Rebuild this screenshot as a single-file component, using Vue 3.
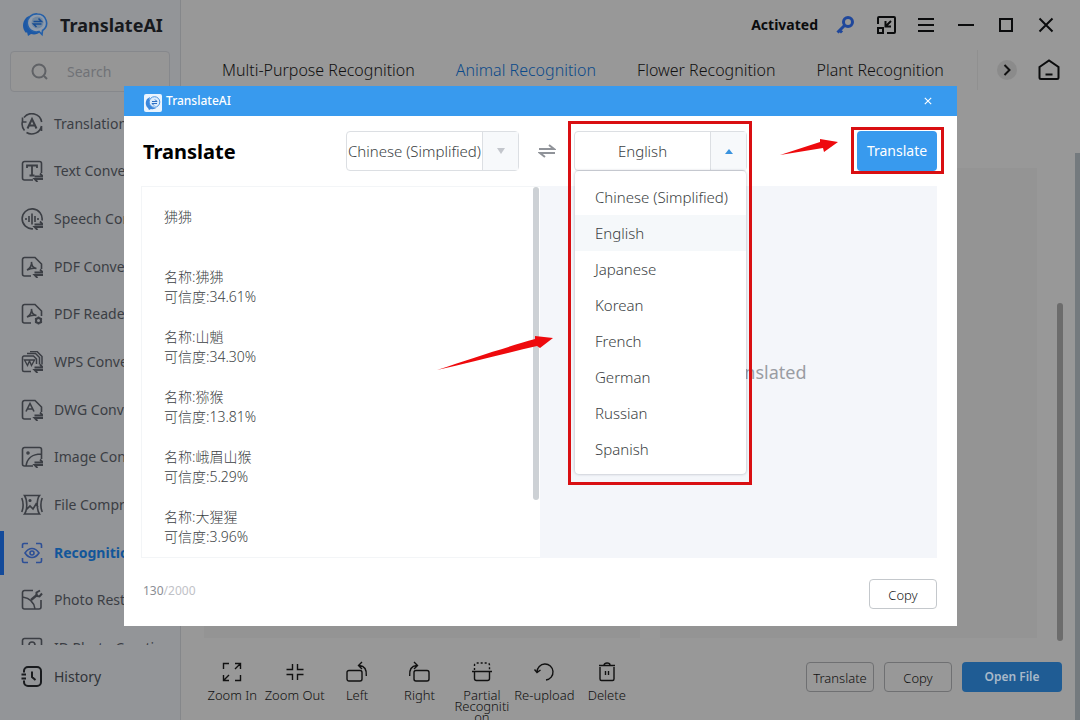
<script setup>
import { ref } from 'vue'

const navItems = [
  { label: 'Translation', icon: 'translation' },
  { label: 'Text Conversion', icon: 'text' },
  { label: 'Speech Conversion', icon: 'speech' },
  { label: 'PDF Conversion', icon: 'pdf' },
  { label: 'PDF Reader', icon: 'reader' },
  { label: 'WPS Conversion', icon: 'wps' },
  { label: 'DWG Conversion', icon: 'dwg' },
  { label: 'Image Conversion', icon: 'image' },
  { label: 'File Compression', icon: 'compress' },
  { label: 'Recognition', icon: 'recognition', active: true },
  { label: 'Photo Restoration', icon: 'restore' },
  { label: 'ID Photo Creation', icon: 'idphoto' },
]
const tabs = ['Multi-Purpose Recognition', 'Animal Recognition', 'Flower Recognition', 'Plant Recognition']
const activeTab = ref('Animal Recognition')
const tools = [
  { label: 'Zoom In', icon: 'in' },
  { label: 'Zoom Out', icon: 'out' },
  { label: 'Left', icon: 'left' },
  { label: 'Right', icon: 'right' },
  { label: 'Partial Recognition', icon: 'partial' },
  { label: 'Re-upload', icon: 'reupload' },
  { label: 'Delete', icon: 'delete' },
]
const languages = ['Chinese (Simplified)', 'English', 'Japanese', 'Korean', 'French', 'German', 'Russian', 'Spanish']
const source = ref('Chinese (Simplified)')
const target = ref('English')
const text = ref(
  '狒狒\n\n\n名称:狒狒\n可信度:34.61%\n\n名称:山魈\n可信度:34.30%\n\n名称:猕猴\n可信度:13.81%\n\n名称:峨眉山猴\n可信度:5.29%\n\n名称:大猩猩\n可信度:3.96%'
)
</script>

<template>
  <div class="app">
    <aside class="sidebar">
      <div class="brand">
        <svg class="logo" viewBox="0 0 26 26" aria-hidden="true">
          <path d="M4 6C0 10 0 17 4 21l1-1 1 4 3-2c4 1 7 0 9-2-8 1-14-6-10-16C6 4 5 5 4 6z" fill="#1c58a6" />
          <path d="M15.500 2a9 9 0 0 1 5 16.500l-.5 4-3-3a9 9 0 1 1-1.500-17.500z" fill="#8f9bab" stroke="#2560a8" stroke-width="1.600" />
          <circle cx="15.500" cy="10.500" r="6" fill="#72889f" />
          <path d="M11.500 9.500h8l-3-3M19.500 12h-8l3 3" fill="none" stroke="#174c94" stroke-width="1.500" />
        </svg>
        <span>TranslateAI</span>
      </div>
      <label class="search">
        <svg viewBox="0 0 18 18" aria-hidden="true"><circle cx="8" cy="8" r="6.500" /><path d="m13 13 3 3" /></svg>
        <input type="search" placeholder="Search" aria-label="Search" />
      </label>
      <nav class="nav">
        <ul>
          <li v-for="item in navItems" :key="item.label">
            <a href="#" :class="{ active: item.active }">
              <svg viewBox="0 0 22 22" aria-hidden="true">
                <template v-if="item.icon === 'translation'">
                  <path d="M3 4.500A10 10 0 0 1 20.700 9M1.300 9A10 10 0 0 0 3.500 17.500M20.500 13A10 10 0 0 1 5.500 19.500M20.500 13v5M1.500 4.500v4.500h4" />
                  <path d="M6.500 15.500 11 6l4.500 9.500M8 12.500h6" stroke-width="2" />
                </template>
                <template v-else-if="item.icon === 'text'">
                  <path d="M12 20H3.500a2 2 0 0 1-2-2V3.500a2 2 0 0 1 2-2h15a2 2 0 0 1 2 2V13" />
                  <path d="M6 8V5.500h10V8M11 5.500V15M8.500 15.500h5" stroke-width="1.800" />
                </template>
                <template v-else-if="item.icon === 'speech'">
                  <path d="M12 20.800A10 10 0 1 1 21 12.500" />
                  <path d="M5 10v2M8 8v6M11 5.500v11M14 8v6M17 10v2" />
                </template>
                <template v-else-if="item.icon === 'pdf' || item.icon === 'reader'">
                  <path d="M10 20H3.500a2 2 0 0 1-2-2V3.500a2 2 0 0 1 2-2H14L20.500 8v5" />
                  <path d="M6 14c3-1 5-5 4.500-8 0 4 2 6 5 6.500C12 12 8 13 6 14z" />
                </template>
                <template v-else-if="item.icon === 'wps'">
                  <path d="M10 20.500H3a1.500 1.500 0 0 1-1.500-1.500V6.500A1.500 1.500 0 0 1 3 5h9.500l3 3v5M6 2.500h8.500l4 4v7M9 .5h7l5 5v8" stroke-width="1.500" />
                  <path d="M3.500 9 6.500 14.500 8.500 10l2 4.500L13.500 9zM4.500 9h9" stroke-width="1.400" />
                </template>
                <template v-else-if="item.icon === 'dwg'">
                  <path d="M10 20H3.500a2 2 0 0 1-2-2V3.500a2 2 0 0 1 2-2H14L20.500 8v5" />
                  <path d="m5 12.500 4-8 4 8M6.500 10h5" />
                </template>
                <template v-else-if="item.icon === 'image'">
                  <path d="M12 20H3.500a2 2 0 0 1-2-2V3.500a2 2 0 0 1 2-2h15a2 2 0 0 1 2 2V13M5 20c1-7 6-12 15-12" />
                  <circle cx="7" cy="7" r="1" />
                </template>
                <template v-else-if="item.icon === 'compress'">
                  <path d="M3.500 1.500h15c-3 4-3 14 0 18.500h-15c3-4 3-14 0-18.500zM.8 4c1.500 4 1.500 10 0 14M21.200 4c-1.500 4-1.500 10 0 14M5 16l4-4 3 3 3-5 2 3" />
                  <circle cx="9" cy="6.500" r=".8" />
                </template>
                <template v-else-if="item.icon === 'recognition'">
                  <path d="M1.500 6V3a1.500 1.500 0 0 1 1.500-1.500h4M15 1.500h4A1.500 1.500 0 0 1 20.500 3v3M20.500 16v3a1.500 1.500 0 0 1-1.500 1.500h-4M7 20.500H3A1.500 1.500 0 0 1 1.500 19v-3M4 11c4-6 10-6 14 0-4 6-10 6-14 0z" />
                  <circle cx="11" cy="11" r="2" />
                </template>
                <template v-else-if="item.icon === 'restore'">
                  <path d="M12 1.500H3.500a2 2 0 0 0-2 2V18a2 2 0 0 0 2 2H18a2 2 0 0 0 2-2v-7M1.500 8C8 9 13 12 14 20" />
                  <path d="m10 11 6.500-5.500" stroke-width="2.400" />
                  <path d="M19 1.500 15.500 3.500v3.500l3 .5 2.500-3" stroke-width="2" />
                </template>
                <template v-else>
                  <path d="M1.500 20V3.500a2 2 0 0 1 2-2h15a2 2 0 0 1 2 2V20" /><circle cx="11" cy="8" r="3" />
                </template>
                <path
                  v-if="['text', 'speech', 'pdf', 'wps', 'dwg', 'image'].includes(item.icon)"
                  d="M13.500 16.500H22l-3-3M22 19h-8.500l3 3"
                  stroke-width="1.800"
                />
                <g v-if="item.icon === 'reader'"><circle cx="17.500" cy="17.500" r="2.500" stroke-width="2" /><path d="M17.500 13.500v1M17.500 20.500v1M14 15.500l1 .5M20 19l1 .5M14 19.500l1-.5M20 16l1-.5" /></g>
              </svg>
              <span>{{ item.label }}</span>
            </a>
          </li>
        </ul>
      </nav>
      <a href="#" class="history">
        <svg viewBox="0 0 22 22" aria-hidden="true">
          <path d="M3 6.500V5a4 4 0 0 1 4-4h9a4 4 0 0 1 4 4v11a4 4 0 0 1-4 4H7a4 4 0 0 1-4-4v-1.500M.5 8.500H5M.5 12.500H5M11 5.500V11l3.500 3" />
        </svg>
        <span>History</span>
      </a>
    </aside>

    <main class="main">
      <header class="topbar">
        <strong>Activated</strong>
        <button class="icon key" aria-label="Licence key">
          <svg viewBox="0 0 20 20"><circle cx="12" cy="7" r="4.500" /><path d="m8.500 10.500-7 7M3.500 15l2.500 2.500" /></svg>
        </button>
        <button class="icon" aria-label="Mini window">
          <svg viewBox="0 0 20 20"><path d="M2 9V3a1 1 0 0 1 1-1h15a1 1 0 0 1 1 1v14a1 1 0 0 1-1 1h-7M15 6l-5 5M9.500 6v5.500H15M2 13h5v5H2z" /></svg>
        </button>
        <button class="icon" aria-label="Menu">
          <svg viewBox="0 0 20 20"><path d="M2 4h16M2 10h16M2 16h16" /></svg>
        </button>
        <button class="icon" aria-label="Minimise"><svg viewBox="0 0 20 20"><path d="M2 10h16" /></svg></button>
        <button class="icon" aria-label="Maximise"><svg viewBox="0 0 20 20"><path d="M4 4h12v12H4z" /></svg></button>
        <button class="icon" aria-label="Close window"><svg viewBox="0 0 20 20"><path d="m3.500 3.500 13 13M16.500 3.500l-13 13" /></svg></button>
      </header>

      <div class="tabs">
        <div class="tab-list">
          <button v-for="tab in tabs" :key="tab" :class="{ on: tab === activeTab }" @click="activeTab = tab">{{ tab }}</button>
        </div>
        <div class="tab-tools">
          <button class="next" aria-label="More tabs"><svg viewBox="0 0 12 12"><path d="m3.500 1 5 5-5 5" /></svg></button>
          <button class="icon" aria-label="Home">
            <svg viewBox="0 0 22 22"><path d="M1.500 8 11 1.500 20.500 8v10.500a1.500 1.500 0 0 1-1.500 1.500H3a1.500 1.500 0 0 1-1.500-1.500zM7.500 15.500h7" /></svg>
          </button>
        </div>
      </div>

      <div class="workspace">
        <div class="pane"></div>
        <div class="pane"></div>
        <div class="thumb"></div>
      </div>

      <footer class="toolbar">
        <div class="tools">
          <button v-for="tool in tools" :key="tool.label" :class="{ narrow: tool.icon === 'partial' }">
            <svg viewBox="0 0 20 20" aria-hidden="true">
              <path v-if="tool.icon === 'in'" d="M1.500 7V1.500H7M13 1.500h5.500V7M18 2l-5 5M1.500 13v5.500H7M2 18l5-5M13 18.500h5.500V13" />
              <path v-else-if="tool.icon === 'out'" d="M7.500 2v5.500H1.500M12.500 2v5.500h6M1.500 12.500h6V18M18.500 12.500h-6V18" />
              <path v-else-if="tool.icon === 'left'" d="M3 8.500h10a2 2 0 0 1 2 2V17a2 2 0 0 1-2 2H2a2 2 0 0 1-2-2v-6.500a2 2 0 0 1 2-2zM19.300 14c.5-6-1-10-7-10.500M15 0l-3.500 3.500L15 7" />
              <path v-else-if="tool.icon === 'right'" d="M7 8.500h11a2 2 0 0 1 2 2V17a2 2 0 0 1-2 2H7a2 2 0 0 1-2-2v-6.500a2 2 0 0 1 2-2zM.7 14c-.5-6 1-10 7-10.500M5 0l3.500 3.500L5 7" />
              <template v-else-if="tool.icon === 'partial'">
                <path d="M0 9.500h20M2.500 10v6.500a2 2 0 0 0 2 2h11a2 2 0 0 0 2-2V10" />
                <path d="M2.500 8V3a2 2 0 0 1 2-2h11a2 2 0 0 1 2 2v5" stroke-dasharray="2 2" />
              </template>
              <path v-else-if="tool.icon === 'reupload'" d="M3 10a8 8 0 1 1 9 8M.5 7.500 3 10.500l3.500-2.500" />
              <path v-else d="M3 5v12a1.500 1.500 0 0 0 1.500 1.500h11A1.500 1.500 0 0 0 17 17V5M2 3.500h16M7 3a3 2 0 0 1 6 0M8.500 9v4M11.500 9v4" />
            </svg>
            <span>{{ tool.label }}</span>
          </button>
        </div>
        <div class="actions">
          <button class="outline">Translate</button>
          <button class="outline">Copy</button>
          <button class="solid">Open File</button>
        </div>
      </footer>
    </main>
    <div class="page-scroll"></div>

    <div class="layer">
      <section class="dialog" role="dialog" aria-label="Translate">
        <header class="titlebar">
          <svg viewBox="0 0 18 18" aria-hidden="true">
            <rect width="18" height="18" rx="2" fill="#eaf4fe" />
            <path d="M3 5c-2 3-1.500 7 1 9l1 2 2-1c2 .5 4 0 5-1-5 0-8-5-6-11z" fill="#3a86dc" />
            <circle cx="10.500" cy="8" r="5.300" fill="#dcecfc" stroke="#4d94e0" />
            <path d="M8 7.500h5l-2-2M13 9.500H8l2 2" fill="none" stroke="#2c6fc4" />
          </svg>
          <span>TranslateAI</span>
          <button aria-label="Close"><svg viewBox="0 0 10 10"><path d="m1 1 8 8M9 1 1 9" /></svg></button>
        </header>

        <div class="body">
          <div class="controls">
            <h1>Translate</h1>
            <div class="picker">
              <select v-model="source" aria-label="Source language">
                <option v-for="l in languages" :key="l">{{ l }}</option>
              </select>
              <span class="caret"><svg viewBox="0 0 8 6"><path d="M0 0h8L4 6z" fill="#c3c6cc" /></svg></span>
            </div>
            <button class="swap" aria-label="Swap languages">
              <svg viewBox="0 0 18 14"><path d="M1 5h15l-5-4M17 9H2l5 4" /></svg>
            </button>
            <div class="picker">
              <select v-model="target" aria-label="Target language">
                <option v-for="l in languages" :key="l">{{ l }}</option>
              </select>
              <span class="caret"><svg viewBox="0 0 8 6"><path d="M0 6h8L4 1z" fill="#3a93de" /></svg></span>
              <ul class="menu" role="listbox" aria-label="Languages">
                <li v-for="l in languages" :key="l" role="option" :aria-selected="l === target" :class="{ chosen: l === target }" @click="target = l">{{ l }}</li>
              </ul>
              <div class="mark mark-menu"></div>
            </div>
            <div class="submit">
              <button>Translate</button>
              <div class="mark mark-button"></div>
              <svg class="arrow arrow-small" viewBox="0 0 58 20"><path d="M0 17 40 4V1l18 3-14 10-1-4z" /></svg>
            </div>
          </div>

          <div class="texts">
            <div class="source">
              <textarea v-model="text" aria-label="Source text" spellcheck="false"></textarea>
              <div class="bar"><div></div></div>
            </div>
            <div class="result">To be translated</div>
            <svg class="arrow arrow-large" viewBox="0 0 116 36"><path d="M0 34C35 22 70 11 98 3V0l18 2-13 10-3-2C70 17 35 26 0 34z" /></svg>
          </div>

          <div class="foot">
            <p><span class="used">130</span><span>/2000</span></p>
            <button>Copy</button>
          </div>
        </div>
      </section>
    </div>
  </div>
</template>

<style>
body { margin: 0; }
</style>

<style scoped>
* { box-sizing: border-box; }
.app {
  position: relative;
  display: flex;
  height: 100vh;
  overflow: hidden;
  background: #989898;
  color: #232427;
  font: 14px/20px "Noto Sans", "Noto Sans CJK SC", sans-serif;
}
button, input, select, textarea { font: inherit; color: inherit; }
button { padding: 0; border: 0; background: none; cursor: pointer; }
a { color: inherit; text-decoration: none; }
ul { margin: 0; padding: 0; list-style: none; }
svg { display: block; fill: none; stroke: currentColor; }

.sidebar {
  flex: 0 0 181px;
  display: flex;
  flex-direction: column;
  background: #939598;
  border-right: 1px solid #85878a;
}
.brand {
  display: flex;
  align-items: center;
  gap: 12px;
  height: 51px;
  padding: 0 0 2px 22px;
  font-size: 18px;
  font-weight: 700;
  color: #17191d;
}
.logo { width: 26px; height: 26px; stroke: none; }
.search {
  display: flex;
  align-items: center;
  gap: 18px;
  height: 41px;
  margin: 0 10px;
  padding-left: 20px;
  border: 1px solid #86888c;
  border-radius: 4px;
  background: #969696;
}
.search svg { width: 18px; height: 18px; stroke: #606266; stroke-width: 2; }
.search input {
  width: 90px;
  padding: 0;
  border: 0;
  outline: 0;
  background: none;
}
.search input::placeholder { color: #707276; opacity: 1; }
.nav { height: 545px; margin-top: 8px; overflow: hidden; color: #3b3e44; }
.nav ul { display: grid; grid-auto-rows: 1fr; height: 572px; }
.nav li { display: grid; align-items: center; }
.nav a, .history {
  display: flex;
  align-items: center;
  gap: 11px;
  height: 44px;
  padding-left: 21px;
  white-space: nowrap;
}
.nav svg, .history svg { flex: none; width: 22px; height: 22px; stroke-width: 1.6; }
.nav a.active {
  padding-left: 17px;
  border-left: 4px solid #134a9a;
  color: #12569a;
  font-weight: 700;
}
.active svg { color: #2d4f96; }
.history { margin-top: 10px; color: #303338; }
.history svg { stroke: #191b1e; stroke-width: 2; }

.main { flex: 1; display: flex; flex-direction: column; min-width: 0; }
.topbar {
  display: flex;
  align-items: center;
  justify-content: flex-end;
  gap: 20px;
  height: 50px;
  padding-right: 24px;
  color: #0b0c0d;
}
.topbar strong { font-weight: 700; margin-right: -2px; }
.icon svg { width: 20px; height: 20px; stroke-width: 2; }
.key { color: #1f479b; }
.key svg { stroke-width: 3; }
.tabs {
  display: flex;
  align-items: center;
  justify-content: space-between;
  height: 42px;
  padding: 0 20px 2px 41px;
  color: #111;
}
.tab-list {
  display: flex;
  gap: 41px;
  font-size: 16px;
  font-weight: 300;
  white-space: nowrap;
}
.tabs .on { color: #0b4a8a; }
.tab-tools {
  display: flex;
  align-items: center;
  gap: 21px;
  height: 40px;
  padding-left: 19px;
  border-left: 1px solid #909090;
}
.next {
  display: grid;
  place-items: center;
  width: 20px;
  height: 20px;
  border-radius: 50%;
  background: #8b8b8b;
}
.next svg { width: 12px; height: 12px; stroke: #111; stroke-width: 2; }
.tab-tools .icon svg { width: 22px; height: 22px; stroke: #0b0c0d; }
.workspace {
  flex: 1;
  display: flex;
  gap: 20px;
  margin-top: 76px;
  padding: 0 17px 0 23px;
}
.pane { flex: 1; background: #949494; margin-bottom: 3px; }
.pane + .pane { flex: 0 0 377px; }
.thumb {
  flex: 0 0 6px;
  margin-top: 135px;
  border-radius: 3px;
  background: #6c6c6c;
}
.toolbar {
  display: flex;
  justify-content: space-between;
  height: 79px;
  padding: 21px 18px 0 20px;
}
.tools { display: grid; grid-template-columns: repeat(7, 1fr); width: 437px; }
.tools button {
  display: flex;
  flex-direction: column;
  align-items: center;
  gap: 8px;
  font-size: 13px;
  font-weight: 300;
  color: #111;
  line-height: 11px;
  white-space: nowrap;
}
.tools svg { width: 20px; height: 20px; stroke-width: 1.4; overflow: visible; }
.tools .narrow span { width: 56px; white-space: normal; overflow-wrap: anywhere; }
.actions { display: flex; gap: 10px; font-size: 13px; font-weight: 300; color: #111; }
.actions button { height: 30px; width: 68px; border-radius: 4px; }
.actions .outline { border: 1px solid #6f7072; padding-top: 2px; }
.actions .solid { width: 100px; background: #1f5c94; color: #a9b9c9; font-size: 12px; font-weight: 600; }
.page-scroll { position: absolute; top: 153px; right: 0; bottom: 0; width: 5px; background: #747a7e; }

.layer {
  position: absolute;
  inset: 0;
  display: flex;
  align-items: flex-start;
  padding: 86px 123px 0 124px;
}
.dialog { flex: 1; background: #fff; color: #55585d; }
.titlebar {
  display: flex;
  align-items: center;
  gap: 4px;
  height: 30px;
  padding: 0 24px 0 20px;
  background: #389aee;
  color: #fff;
  font-size: 12px;
  font-weight: 500;
}
.titlebar > svg { width: 18px; height: 18px; margin-top: 3px; stroke: none; }
.titlebar button { margin-left: auto; }
.titlebar button svg { width: 10px; height: 8px; stroke-width: 1.4; }
.body { padding: 15px 20px 17px 17px; }
.controls { display: flex; height: 40px; padding-left: 2px; }
h1 { flex: 0 0 203px; margin: 0; font-size: 20px; line-height: 42px; font-weight: 700; color: #000; }
.picker {
  position: relative;
  display: flex;
  flex: 0 0 173px;
  border: 1px solid #dcdfe3;
  border-radius: 4px;
  font-size: 15px;
}
.picker select {
  flex: 1;
  min-width: 0;
  padding: 0;
  border: 0;
  outline: 0;
  appearance: none;
  background: none;
  text-align: center;
  text-align-last: center;
}
.picker, textarea { font-weight: 300; color: #3c3f44; }
.caret {
  display: grid;
  place-items: center;
  width: 36px;
  border-left: 1px solid #dcdfe3;
  background: #f7f9fb;
}
.caret svg { width: 8px; height: 6px; stroke: none; }
.swap { flex: 0 0 55px; display: grid; place-items: center; color: #909399; }
.swap svg { width: 18px; height: 14px; stroke-width: 2; }
.menu {
  position: absolute;
  z-index: 2;
  top: 39px;
  left: 0;
  right: 0;
  padding: 8px 0 7px;
  border-radius: 4px;
  background: #fff;
  box-shadow: 0 0 3px rgba(60, 70, 90, .4);
}
.menu li { height: 36px; padding-left: 20px; line-height: 36px; white-space: nowrap; cursor: pointer; }
.menu .chosen { background: #f5f8fa; }
.mark { position: absolute; border: 3px solid #d90f12; pointer-events: none; z-index: 3; }
.mark-menu { top: -11px; left: -7px; right: -6px; height: 364px; }
.submit { position: relative; margin-left: auto; }
.submit button { width: 80px; height: 40px; border-radius: 4px; background: #389aee; color: #fff; }
.mark-button { inset: -4px -7px -3px -6px; }
.arrow { position: absolute; z-index: 4; fill: #ee0a0d; stroke: none; pointer-events: none; }
.arrow-small { left: -77px; top: 7px; width: 58px; height: 20px; }
.arrow-large { left: 296px; top: 150px; width: 116px; height: 36px; }
.texts { position: relative; display: grid; grid-template-columns: 399fr 397fr; height: 372px; margin-top: 15px; }
.source { display: flex; border: 1px solid #f3f5f7; border-right: 0; }
textarea {
  flex: 1;
  min-width: 0;
  padding: 20px 20px 0 22px;
  border: 0;
  outline: 0;
  resize: none;
  overflow: hidden;
  background: none;
}
.bar { width: 7px; padding-right: 1px; }
.bar div { height: 313px; border-radius: 3px; background: #cdd1d5; }
.result {
  display: grid;
  place-items: center;
  background: #f4f6fa;
  color: #9a9da3;
  font-size: 18px;
}
.foot { display: flex; justify-content: space-between; padding: 21px 0 0 2px; font-size: 12px; }
.foot p { display: flex; margin: 2px 0 0; color: #bfc2c7; }
.foot .used { color: #8b8e94; }
.foot button { width: 68px; height: 30px; padding-top: 2px; border: 1px solid #c4c8cc; border-radius: 4px; color: #222; font-size: 13px; font-weight: 300; }
</style>
